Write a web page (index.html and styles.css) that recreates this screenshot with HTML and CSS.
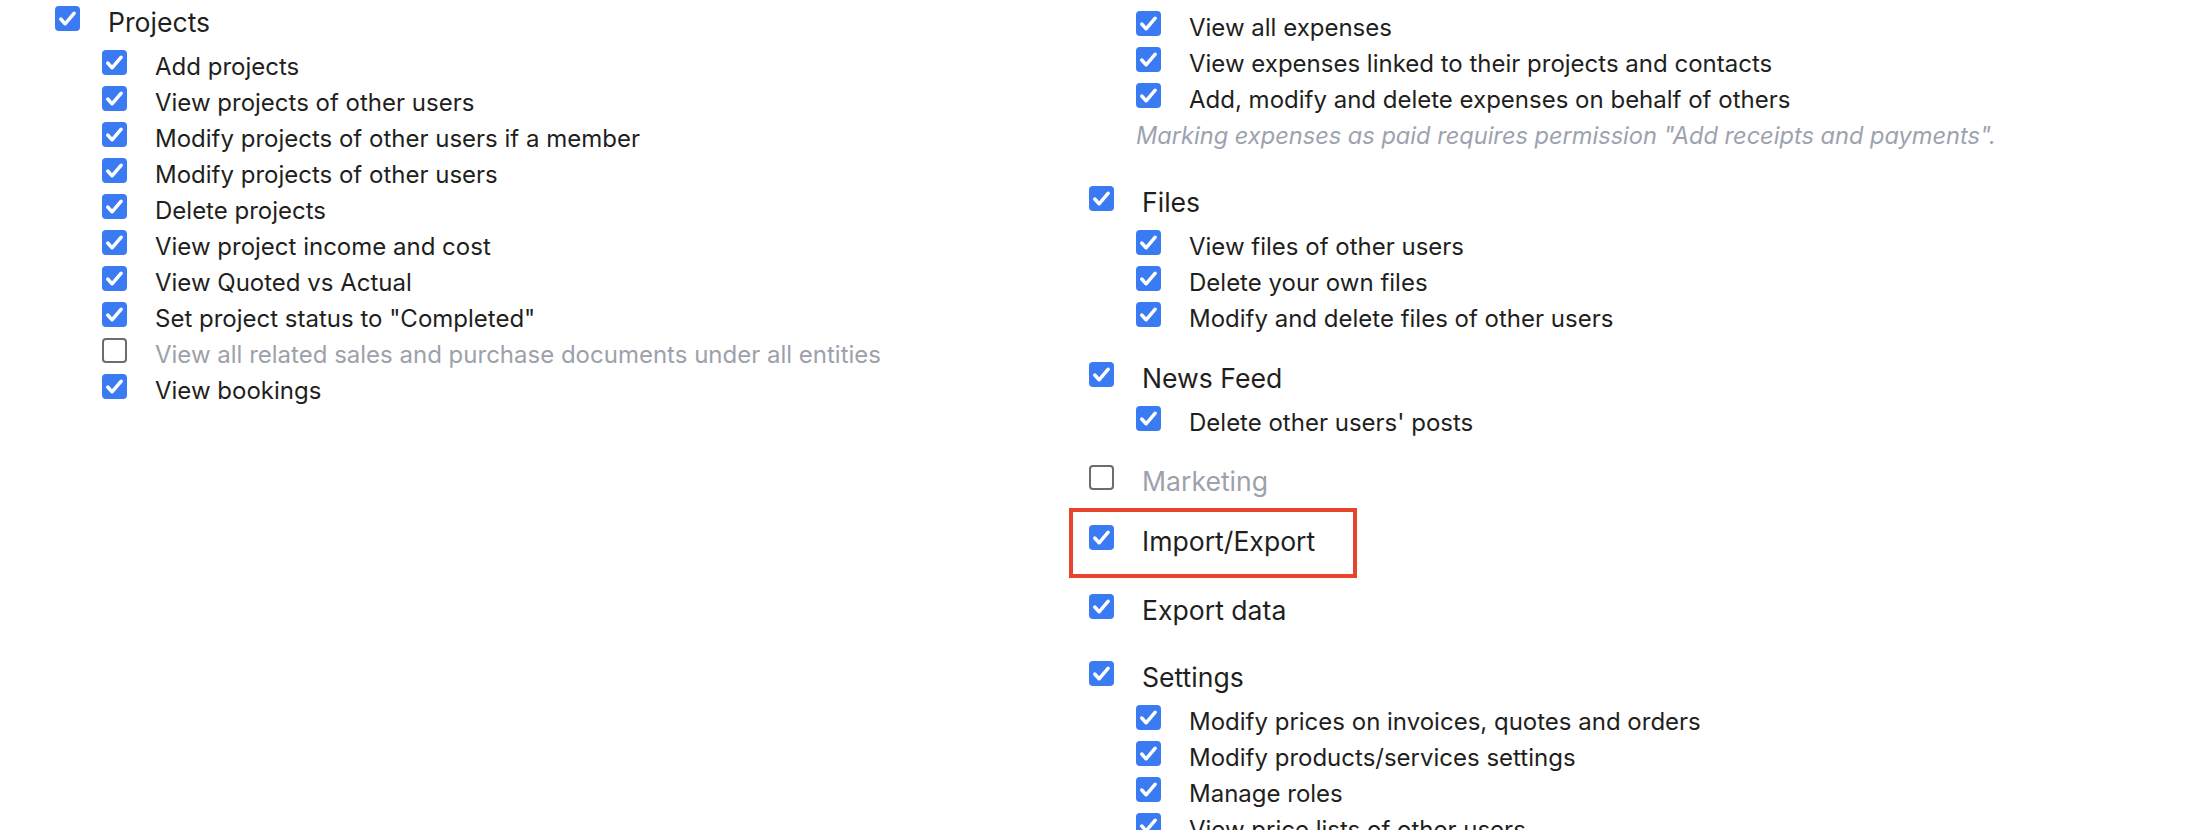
FILE: index.html
```html
<!DOCTYPE html>
<html lang="en">
<head>
<meta charset="utf-8">
<title>Permissions</title>
<link rel="stylesheet" href="styles.css">
</head>
<body>
<div class="page">
  <div class="col col-left">
    <section class="group">
      <div class="row head"><span class="cb on"><svg viewBox="0 0 26 26"><path d="M6 13.5l4.5 5L20 7.5"/></svg></span><span class="label">Projects</span></div>
      <div class="subs">
        <div class="row"><span class="cb on"><svg viewBox="0 0 26 26"><path d="M6 13.5l4.5 5L20 7.5"/></svg></span><span class="label">Add projects</span></div>
        <div class="row"><span class="cb on"><svg viewBox="0 0 26 26"><path d="M6 13.5l4.5 5L20 7.5"/></svg></span><span class="label">View projects of other users</span></div>
        <div class="row"><span class="cb on"><svg viewBox="0 0 26 26"><path d="M6 13.5l4.5 5L20 7.5"/></svg></span><span class="label">Modify projects of other users if a member</span></div>
        <div class="row"><span class="cb on"><svg viewBox="0 0 26 26"><path d="M6 13.5l4.5 5L20 7.5"/></svg></span><span class="label">Modify projects of other users</span></div>
        <div class="row"><span class="cb on"><svg viewBox="0 0 26 26"><path d="M6 13.5l4.5 5L20 7.5"/></svg></span><span class="label">Delete projects</span></div>
        <div class="row"><span class="cb on"><svg viewBox="0 0 26 26"><path d="M6 13.5l4.5 5L20 7.5"/></svg></span><span class="label">View project income and cost</span></div>
        <div class="row"><span class="cb on"><svg viewBox="0 0 26 26"><path d="M6 13.5l4.5 5L20 7.5"/></svg></span><span class="label">View Quoted vs Actual</span></div>
        <div class="row"><span class="cb on"><svg viewBox="0 0 26 26"><path d="M6 13.5l4.5 5L20 7.5"/></svg></span><span class="label">Set project status to "Completed"</span></div>
        <div class="row off"><span class="cb"></span><span class="label">View all related sales and purchase documents under all entities</span></div>
        <div class="row"><span class="cb on"><svg viewBox="0 0 26 26"><path d="M6 13.5l4.5 5L20 7.5"/></svg></span><span class="label">View bookings</span></div>
      </div>
    </section>
  </div>

  <div class="col col-right">
    <section class="group g-expenses">
      <div class="subs">
        <div class="row"><span class="cb on"><svg viewBox="0 0 26 26"><path d="M6 13.5l4.5 5L20 7.5"/></svg></span><span class="label">View all expenses</span></div>
        <div class="row"><span class="cb on"><svg viewBox="0 0 26 26"><path d="M6 13.5l4.5 5L20 7.5"/></svg></span><span class="label">View expenses linked to their projects and contacts</span></div>
        <div class="row"><span class="cb on"><svg viewBox="0 0 26 26"><path d="M6 13.5l4.5 5L20 7.5"/></svg></span><span class="label">Add, modify and delete expenses on behalf of others</span></div>
        <p class="note">Marking expenses as paid requires permission "Add receipts and payments".</p>
      </div>
    </section>

    <section class="group g-files">
      <div class="row head"><span class="cb on"><svg viewBox="0 0 26 26"><path d="M6 13.5l4.5 5L20 7.5"/></svg></span><span class="label">Files</span></div>
      <div class="subs">
        <div class="row"><span class="cb on"><svg viewBox="0 0 26 26"><path d="M6 13.5l4.5 5L20 7.5"/></svg></span><span class="label">View files of other users</span></div>
        <div class="row"><span class="cb on"><svg viewBox="0 0 26 26"><path d="M6 13.5l4.5 5L20 7.5"/></svg></span><span class="label">Delete your own files</span></div>
        <div class="row"><span class="cb on"><svg viewBox="0 0 26 26"><path d="M6 13.5l4.5 5L20 7.5"/></svg></span><span class="label">Modify and delete files of other users</span></div>
      </div>
    </section>

    <section class="group g-news">
      <div class="row head"><span class="cb on"><svg viewBox="0 0 26 26"><path d="M6 13.5l4.5 5L20 7.5"/></svg></span><span class="label">News Feed</span></div>
      <div class="subs">
        <div class="row"><span class="cb on"><svg viewBox="0 0 26 26"><path d="M6 13.5l4.5 5L20 7.5"/></svg></span><span class="label">Delete other users' posts</span></div>
      </div>
    </section>

    <section class="group g-marketing">
      <div class="row head off"><span class="cb"></span><span class="label">Marketing</span></div>
    </section>

    <section class="group g-import">
      <div class="row head marked"><span class="cb on"><svg viewBox="0 0 26 26"><path d="M6 13.5l4.5 5L20 7.5"/></svg></span><span class="label">Import/Export</span></div>
    </section>

    <section class="group g-export">
      <div class="row head"><span class="cb on"><svg viewBox="0 0 26 26"><path d="M6 13.5l4.5 5L20 7.5"/></svg></span><span class="label">Export data</span></div>
    </section>

    <section class="group g-settings">
      <div class="row head"><span class="cb on"><svg viewBox="0 0 26 26"><path d="M6 13.5l4.5 5L20 7.5"/></svg></span><span class="label">Settings</span></div>
      <div class="subs">
        <div class="row"><span class="cb on"><svg viewBox="0 0 26 26"><path d="M6 13.5l4.5 5L20 7.5"/></svg></span><span class="label">Modify prices on invoices, quotes and orders</span></div>
        <div class="row"><span class="cb on"><svg viewBox="0 0 26 26"><path d="M6 13.5l4.5 5L20 7.5"/></svg></span><span class="label">Modify products/services settings</span></div>
        <div class="row"><span class="cb on"><svg viewBox="0 0 26 26"><path d="M6 13.5l4.5 5L20 7.5"/></svg></span><span class="label">Manage roles</span></div>
        <div class="row"><span class="cb on"><svg viewBox="0 0 26 26"><path d="M6 13.5l4.5 5L20 7.5"/></svg></span><span class="label">View price lists of other users</span></div>
      </div>
    </section>
  </div>
</div>
</body>
</html>
```

FILE: styles.css
```css
html, body {
  margin: 0;
  padding: 0;
  background: #ffffff;
  overflow: hidden;
  height: 830px;
}

body {
  font-family: Inter, "Noto Sans", "Liberation Sans", sans-serif;
  color: #1f1f21;
  -webkit-font-smoothing: antialiased;
}

.page {
  display: grid;
  grid-template-columns: 1034px 1fr;
  padding-left: 55px;
}

.col {
  display: flex;
  flex-direction: column;
}

.group {
  display: flex;
  flex-direction: column;
}

/* vertical rhythm of the right column */
.g-files { margin-top: 26px; }
.g-news { margin-top: 24px; }
.g-marketing { margin-top: 23px; }
.g-import { margin-top: 24px; }
.g-export { margin-top: 33px; }
.g-settings { margin-top: 31px; }

.row {
  display: flex;
  align-items: center;
  height: 36px;
  gap: 28px;
  font-size: 24px;
  white-space: nowrap;
}

.row.head {
  font-size: 26.6px;
}

.label {
  line-height: 27px;
  padding-top: 9px;
}

.subs {
  display: flex;
  flex-direction: column;
  padding-left: 47px;
  padding-top: 8px;
}

.g-expenses .subs {
  padding-top: 5px;
}

.cb {
  flex: none;
  box-sizing: border-box;
  width: 25px;
  height: 25px;
  border-radius: 4px;
  border: 2px solid #6c6c6c;
  background: #ffffff;
  display: flex;
  align-items: center;
  justify-content: center;
}

.cb.on {
  border: none;
  background: #3a7af3;
}

.cb svg {
  width: 25px;
  height: 25px;
  fill: none;
  stroke: #ffffff;
  stroke-width: 3.6;
  stroke-linecap: round;
  stroke-linejoin: round;
}

.row.off .label {
  color: #9ca1ab;
}

.note {
  margin: 5px 0 0;
  height: 36px;
  line-height: 36px;
  font-size: 23.6px;
  font-style: italic;
  color: #9ca3af;
  white-space: nowrap;
}

.row.marked {
  position: relative;
}

.row.marked::after {
  content: "";
  position: absolute;
  left: -20px;
  top: -11px;
  width: 288px;
  height: 70px;
  box-sizing: border-box;
  border: 4px solid #e6442c;
}
```
